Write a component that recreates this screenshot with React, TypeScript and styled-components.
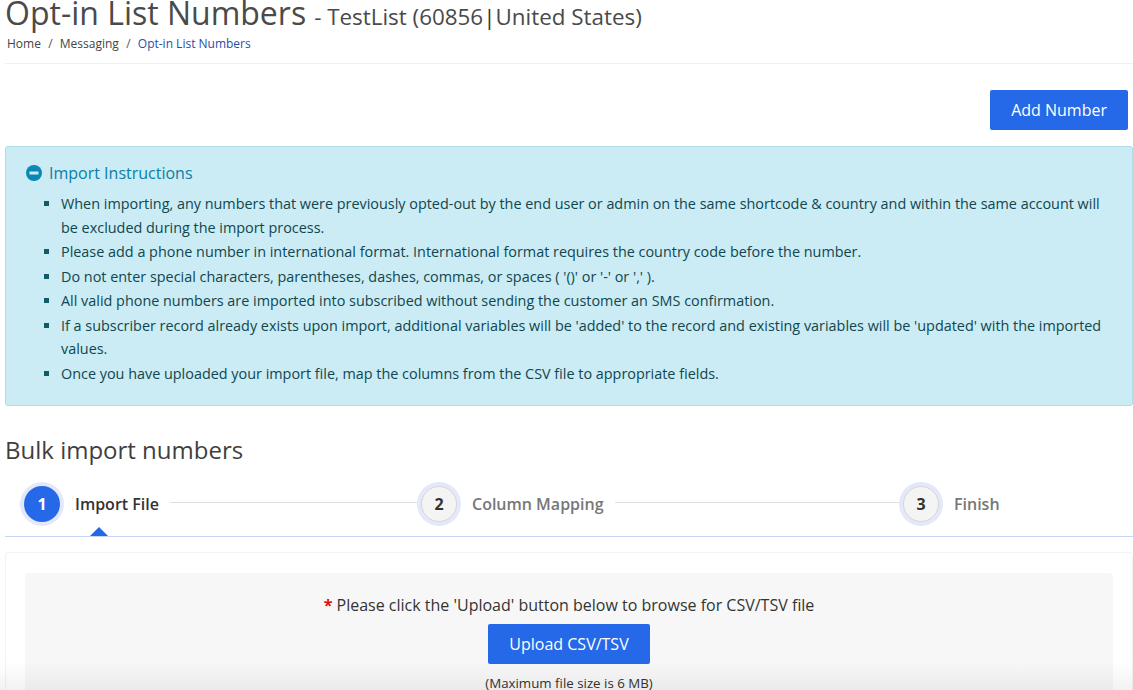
import { createGlobalStyle } from "styled-components"
import styled from "styled-components"

const instructions = [
  "When importing, any numbers that were previously opted-out by the end user or admin on the same shortcode & country and within the same account will be excluded during the import process.",
  "Please add a phone number in international format. International format requires the country code before the number.",
  "Do not enter special characters, parentheses, dashes, commas, or spaces ( '()' or '-' or ',' ).",
  "All valid phone numbers are imported into subscribed without sending the customer an SMS confirmation.",
  "If a subscriber record already exists upon import, additional variables will be 'added' to the record and existing variables will be 'updated' with the imported values.",
  "Once you have uploaded your import file, map the columns from the CSV file to appropriate fields.",
]

const App = () => {
  return (
    <>
      <GlobalStyle />
      <Page>
        <TitleRow>
          <Title>Opt-in List Numbers</Title>
          <SubTitle>
            - TestList (60856<Pipe>|</Pipe>United States)
          </SubTitle>
        </TitleRow>
        <Breadcrumb>
          <span>Home</span>
          <Slash>/</Slash>
          <span>Messaging</span>
          <Slash>/</Slash>
          <CurrentCrumb>Opt-in List Numbers</CurrentCrumb>
        </Breadcrumb>
        <Actions>
          <PrimaryButton>Add Number</PrimaryButton>
        </Actions>
        <InfoBox>
          <InfoHeader>
            <svg width="16" height="16" viewBox="0 0 16 16">
              <circle cx="8" cy="8" r="8" fill="#0a87b5" />
              <rect x="3.5" y="6.5" width="9" height="3" fill="#cbecf4" />
            </svg>
            Import Instructions
          </InfoHeader>
          <InfoList>
            {instructions.map((text) => (
              <li key={text}>{text}</li>
            ))}
          </InfoList>
        </InfoBox>
        <SectionTitle>Bulk import numbers</SectionTitle>
        <Steps>
          <Step $width={397}>
            <StepCircle $active>1</StepCircle>
            <StepLabel $active>Import File</StepLabel>
            <StepLine />
            <Arrow />
          </Step>
          <Step $width={482}>
            <StepCircle>2</StepCircle>
            <StepLabel>Column Mapping</StepLabel>
            <StepLine />
          </Step>
          <Step>
            <StepCircle>3</StepCircle>
            <StepLabel>Finish</StepLabel>
          </Step>
        </Steps>
        <Card>
          <UploadPanel>
            <UploadHint>
              <Required>*</Required> Please click the 'Upload' button below to browse for CSV/TSV file
            </UploadHint>
            <PrimaryButton>Upload CSV/TSV</PrimaryButton>
            <SizeNote>(Maximum file size is 6 MB)</SizeNote>
          </UploadPanel>
        </Card>
        <BottomShade />
      </Page>
    </>
  )
}

export default App

const GlobalStyle = createGlobalStyle`
  html, body {
    margin: 0;
    height: 100%;
    overflow: hidden;
    background: #fff;
  }
  body {
    font-family: "Open Sans", "Noto Sans", sans-serif;
    color: #333;
  }
`

const Page = styled.div`
  position: relative;
  width: 1133px;
  height: 690px;
  overflow: hidden;
  padding-left: 5px;
  box-sizing: border-box;
`

const BottomShade = styled.div`
  position: absolute;
  left: 0;
  right: 0;
  bottom: 0;
  height: 28px;
  background: linear-gradient(rgba(0, 0, 0, 0), rgba(0, 0, 0, 0.05));
  pointer-events: none;
`

const TitleRow = styled.div`
  display: flex;
  align-items: baseline;
  gap: 8px;
  height: 30px;
  margin-top: -2px;
  white-space: nowrap;
`

const Title = styled.h1`
  margin: 0;
  font-size: 32px;
  line-height: 30px;
  font-weight: 400;
  color: #4a4a4a;
`

const SubTitle = styled.span`
  font-size: 22.4px;
  line-height: 30px;
  color: #4a4a4a;
`

const Pipe = styled.span`
  color: #333;
`

const Breadcrumb = styled.div`
  display: flex;
  gap: 7.25px;
  padding: 7px 0 11px 2px;
  font-size: 12px;
  line-height: 17px;
  color: #444;
  border-bottom: 1px solid #f0f0f0;
`

const Slash = styled.span`
  color: #555;
`

const CurrentCrumb = styled.span`
  color: #1f4fa8;
`

const Actions = styled.div`
  display: flex;
  justify-content: flex-end;
  padding: 26px 5px 16px 0;
`

const PrimaryButton = styled.button`
  height: 40px;
  padding: 0 21px;
  border: none;
  border-radius: 2px;
  background: #2569e8;
  color: #fff;
  font-family: inherit;
  font-size: 16px;
`

const InfoBox = styled.div`
  width: 1128px;
  height: 260px;
  box-sizing: border-box;
  padding: 16px 20px;
  background: #cbecf4;
  border: 1px solid #aedfe9;
  border-radius: 3px;
`

const InfoHeader = styled.div`
  display: flex;
  align-items: center;
  gap: 7px;
  font-size: 16px;
  line-height: 20px;
  color: #0a7ea8;
`

const InfoList = styled.ul`
  margin: 9px 0 0;
  padding-left: 35px;
  list-style: square;
  font-size: 14.4px;
  line-height: 23.5px;
  color: #10464f;

  li {
    margin-bottom: 1px;
  }

  li::marker {
    color: #0f5c66;
  }
`

const SectionTitle = styled.h2`
  margin: 27px 0 0;
  font-size: 24px;
  line-height: 34px;
  font-weight: 400;
  color: #3f3f3f;
`

const Steps = styled.div`
  display: flex;
  height: 54px;
  padding-left: 19px;
  margin-top: 15px;
  border-bottom: 1px solid #c6d5f5;
`

const Step = styled.div<{ $width?: number }>`
  position: relative;
  display: flex;
  align-items: center;
  align-self: flex-start;
  flex-shrink: 0;
  height: 44px;
  gap: 11px;
  width: ${(p) => (p.$width ? `${p.$width}px` : "auto")};
  box-sizing: border-box;
`

const StepCircle = styled.div<{ $active?: boolean }>`
  width: 36px;
  height: 36px;
  box-sizing: border-box;
  flex-shrink: 0;
  display: flex;
  align-items: center;
  justify-content: center;
  border-radius: 50%;
  font-size: 16px;
  font-weight: 700;
  color: ${(p) => (p.$active ? "#fff" : "#333")};
  background: ${(p) => (p.$active ? "#2569e8" : "#f4f4f4")};
  border: ${(p) => (p.$active ? "none" : "1px solid #d5d5d5")};
  box-shadow: 0 0 0 4px #e4e9fa;
`

const StepLabel = styled.span<{ $active?: boolean }>`
  margin-left: 4px;
  font-size: 16px;
  font-weight: 600;
  white-space: nowrap;
  color: ${(p) => (p.$active ? "#333" : "#777")};
`

const StepLine = styled.div`
  flex: 1;
  height: 1px;
  margin-top: -4px;
  background: #e0e0e0;
`

const Arrow = styled.div`
  position: absolute;
  left: 66px;
  bottom: -10px;
  width: 0;
  height: 0;
  border-left: 9px solid transparent;
  border-right: 9px solid transparent;
  border-bottom: 9px solid #2569e8;
`

const Card = styled.div`
  margin-top: 15px;
  width: 1128px;
  padding: 20px 19px 0;
  box-sizing: border-box;
  border: 1px solid #f3f3f3;
  border-radius: 3px;
`

const UploadPanel = styled.div`
  display: flex;
  flex-direction: column;
  align-items: center;
  height: 200px;
  padding-top: 21px;
  box-sizing: border-box;
  background: #f7f7f7;
  border-radius: 3px;
`

const UploadHint = styled.div`
  font-size: 16px;
  line-height: 22px;
  margin-bottom: 8px;
  color: #333;
`

const Required = styled.span`
  color: #e01010;
  font-weight: 700;
`

const SizeNote = styled.div`
  margin-top: 11px;
  font-size: 13.3px;
  line-height: 16px;
  color: #333;
`
